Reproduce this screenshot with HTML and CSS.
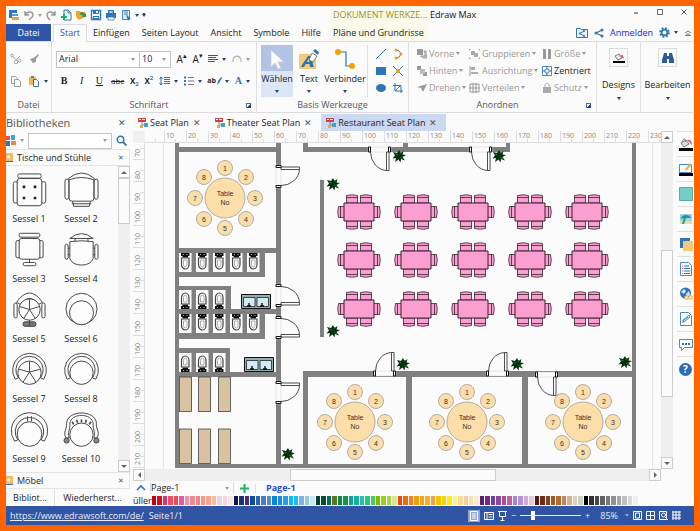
FILE: index.html
```html
<!DOCTYPE html>
<html lang="de">

<head>
    <meta charset="UTF-8">
    <meta name="viewport" content="width=device-width, initial-scale=1.0">
    <title>Edraw Max</title>
    <link rel="stylesheet" href="styles.css">
</head>

<body>
    <div class="app">
        <header class="header">
            <div class="quick">
                <button aria-label="Edraw"><svg width="12" height="12" viewBox="0 0 12 12"><path d="M1 1h8v3H1zM1 4h3v5H1z" fill="#2f74c0"/><path d="M4 5h6v2H4z" fill="#5a9be0"/><path d="M4 8h7v3H4z" fill="#f0a030"/></svg></button>
                <button aria-label="Rückgängig"><svg width="12" height="12" viewBox="0 0 12 12"><path d="M2 2v4h4M2 6c2-4 8-4 8 0 0 2-2 3-4 5" fill="none" stroke="#999" stroke-width="1.4"/></svg></button>
                <i class="caret gray"></i>
                <button aria-label="Wiederholen"><svg width="12" height="12" viewBox="0 0 12 12"><path d="M10 2v4H6M10 6C8 2 2 2 2 6c0 2 1 3 3 5" fill="none" stroke="#999" stroke-width="1.4"/></svg></button>
                <button aria-label="Neu"><svg width="12" height="12" viewBox="0 0 12 12"><path d="M4 1h4l3 3v7H4z" fill="#fff" stroke="#2f74b5"/><path d="M8 1v3h3" fill="none" stroke="#2f74b5"/><path d="M4 5v6M1 8h6" stroke="#19b26b" stroke-width="2"/></svg></button>
                <button aria-label="Öffnen"><svg width="12" height="12" viewBox="0 0 12 12"><path d="M1 2h4l1 1h4v5L4 11 1 8z" fill="#f4a62a"/><path d="M5 4c2-2 4-1 5 1l1-1v4H7l1-1c-1-1-2-2-3-1z" fill="#2c9a55"/></svg></button>
                <button aria-label="Speichern"><svg width="12" height="12" viewBox="0 0 12 12"><path d="M1.500 1.500h9v9h-9z" fill="#fff" stroke="#2f74b5" stroke-width="1.400"/><path d="M3 1h6v4H3zM3 7h6v4H3z" fill="#2f74b5"/><path d="M4 8h4v1H4zM6 2h2v2H6z" fill="#fff"/></svg></button>
                <button aria-label="Drucken"><svg width="12" height="12" viewBox="0 0 12 12"><path d="M3 1h6v3h2v5H1V4h2z" fill="#2f74b5"/><path d="M4 2h4v2H4zM3 8h6v3H3z" fill="#fff" stroke="#2f74b5" stroke-width=".7"/></svg></button>
                <button aria-label="Vorschau"><svg width="12" height="12" viewBox="0 0 12 12"><path d="M2.500 1.500h7v9h-7z" fill="#dce9f7" stroke="#4a88c8"/><path d="M4 3h4M4 5h4" stroke="#4a88c8"/><path d="M6 5l5 5-2 0-1 2z" fill="#2f74b5"/></svg></button>
                <i class="caret"></i>
                <i class="caret barred"></i>
            </div>
            <div class="context-title">DOKUMENT WERKZE...</div>
            <div class="window-bar">
                <h1>Edraw Max</h1>
                <div class="window-buttons">
                    <button aria-label="Minimieren"><svg width="8" height="8" viewBox="0 0 8 8"><path d="M2 5h4" stroke="#555" stroke-width="1.200"/></svg></button>
                    <button aria-label="Maximieren"><svg width="8" height="8" viewBox="0 0 8 8"><path d="M1.500 1.500h5v5h-5z" fill="none" stroke="#666"/></svg></button>
                    <button aria-label="Schließen"><svg width="8" height="8" viewBox="0 0 8 8"><path d="M1.500 1.500l5 5M6.500 1.500l-5 5" stroke="#555"/></svg></button>
                </div>
            </div>
            <nav class="tabs">
                <a href="#datei" class="tab file">Datei</a>
                <a href="#start" class="tab active">Start</a>
                <a href="#einfuegen" class="tab">Einfügen</a>
                <a href="#layout" class="tab">Seiten Layout</a>
                <a href="#ansicht" class="tab">Ansicht</a>
                <a href="#symbole" class="tab">Symbole</a>
                <a href="#hilfe" class="tab">Hilfe</a>
            </nav>
            <a href="#plaene" class="context-tab">Pläne und Grundrisse</a>
            <div class="account">
                <button aria-label="Freigabeordner"><svg width="12" height="12" viewBox="0 0 12 12"><path d="M.5 1.500h4l1 1h6v8H.5z" fill="#eaf3fc" stroke="#2f74b5"/><path d="M8 4L4 6.500 8 9" fill="none" stroke="#2f74b5"/><circle cx="8" cy="4" r="1" fill="#2f74b5"/><circle cx="4" cy="6.500" r="1" fill="#2f74b5"/><circle cx="8" cy="9" r="1" fill="#2f74b5"/></svg></button>
                <button aria-label="Teilen"><svg width="10" height="10" viewBox="0 0 10 10"><path d="M8 2L2 5l6 3" fill="none" stroke="#2f74b5" stroke-width="1.200"/><circle cx="8" cy="2" r="1.500" fill="#2f74b5"/><circle cx="2" cy="5" r="1.500" fill="#2f74b5"/><circle cx="8" cy="8" r="1.500" fill="#2f74b5"/></svg></button>
                <a href="#anmelden" class="login">Anmelden</a>
                <button class="menu" aria-label="Einstellungen"><svg width="11" height="11" viewBox="0 0 12 12"><circle cx="6" cy="6" r="4.800" fill="none" stroke="#2f74b5" stroke-width="2" stroke-dasharray="2 1.770"/><circle cx="6" cy="6" r="3.200" fill="none" stroke="#2f74b5" stroke-width="2"/></svg><i class="caret"></i></button>
                <button aria-label="Menüband einklappen"><svg width="8" height="8" viewBox="0 0 8 8"><path d="M1 4l3-2 3 2M1.500 6.500h5L4 4.500z" fill="none" stroke="#777"/></svg></button>
            </div>
        </header>

        <section class="ribbon">
            <div class="group clipboard">
                <div class="clip-grid">
                    <button aria-label="Ausschneiden"><svg width="12" height="12" viewBox="0 0 12 12"><path d="M2 3l6 5M10 3L6 7" stroke="#aaa"/><circle cx="2" cy="2.500" r="1.300" fill="none" stroke="#aaa"/><circle cx="6" cy="9" r="1.700" fill="none" stroke="#aaa"/><circle cx="9.500" cy="7.500" r="1.500" fill="none" stroke="#aaa"/></svg></button>
                    <button aria-label="Format übertragen"><svg width="12" height="12" viewBox="0 0 12 12"><path d="M10 1l1 1-3 4v3l-3 1-3-4 3-1 2-1z" fill="#999"/></svg></button>
                    <button aria-label="Kopieren"><svg width="12" height="12" viewBox="0 0 12 12"><path d="M1.500 1.500h4l2 2v5h-6z" fill="#fff" stroke="#999"/><path d="M4.500 4.500h4l2 2v5h-6z" fill="#fff" stroke="#999"/></svg></button>
                    <button class="menu" aria-label="Einfügen"><svg width="12" height="12" viewBox="0 0 12 12"><path d="M1 2h7v8H1z" fill="#f0b654"/><path d="M3 1h3v2H3z" fill="#777"/><path d="M5.500 4.500h3l2 2v5h-5z" fill="#fff" stroke="#2f74b5"/></svg><i class="caret"></i></button>
                </div>
                <div class="group-label"><span>Datei</span></div>
            </div>

            <div class="group font-group">
                <div class="font-row first">
                    <div class="combo-pair">
                        <label class="combo family"><select aria-label="Schriftart"><option>Arial</option></select><i class="caret gray"></i></label>
                        <label class="combo size"><select aria-label="Schriftgröße"><option>10</option></select><i class="caret gray"></i></label>
                    </div>
                    <button class="letter" aria-label="Schrift vergrößern">A<sup>▴</sup></button>
                    <button class="letter" aria-label="Schrift verkleinern">A<sup>▾</sup></button>
                    <button class="menu" aria-label="Ausrichten"><svg width="10" height="10" viewBox="0 0 10 10"><path d="M0 1.500h10M0 3.500h8M0 5.500h10M0 7.500h7" stroke="#555"/></svg><i class="caret"></i></button>
                    <button class="menu" aria-label="Bogentext"><svg width="10" height="10" viewBox="0 0 10 10"><path d="M1 8V6c1-5 7-5 8 0v2" fill="none" stroke="#bbb" stroke-width="1.300"/></svg><i class="caret gray"></i></button>
                </div>
                <div class="font-row">
                    <button class="serif" aria-label="Fett"><b>B</b></button>
                    <button class="serif" aria-label="Kursiv"><em>I</em></button>
                    <button class="serif" aria-label="Unterstrichen"><u>U</u></button>
                    <button class="strike" aria-label="Durchgestrichen"><s>abc</s></button>
                    <button class="script" aria-label="Tiefgestellt">X<sub>2</sub></button>
                    <button class="script" aria-label="Hochgestellt">X<sup>2</sup></button>
                    <button class="menu" aria-label="Zeilenabstand"><svg width="11" height="10" viewBox="0 0 11 10"><path d="M2 1v8M.5 3L2 1l1.500 2M.5 7L2 9l1.500-2" fill="none" stroke="#2f74b5"/><path d="M5 1.500h6M5 3.500h6M5 5.500h6M5 7.500h6" stroke="#666"/></svg><i class="caret"></i></button>
                    <button class="menu" aria-label="Liste"><svg width="10" height="10" viewBox="0 0 10 10"><path d="M0 1.500h2M0 5h2M0 8.500h2" stroke="#2f74b5" stroke-width="2"/><path d="M4 1.500h6M4 5h6M4 8.500h6" stroke="#777"/></svg><i class="caret"></i></button>
                    <button class="menu marker" aria-label="Hervorheben">ab<svg width="5" height="8" viewBox="0 0 5 8"><path d="M0 8l1-4 3-4 1 1-3 5z" fill="#2f74b5"/></svg><i class="caret"></i></button>
                    <button class="menu serif blue" aria-label="Schriftfarbe">A<i class="caret"></i></button>
                </div>
                <div class="group-label"><span>Schriftart</span><i class="launcher"></i></div>
            </div>

            <div class="group tools">
                <div class="tools-row">
                    <button class="tool selected"><svg width="18" height="22" viewBox="0 0 18 22"><path d="M3 2v17l4-4 3 6 3-1-3-6h6z" fill="#fafafa" stroke="#c5cbd8" stroke-width=".6"/></svg><span>Wählen</span><i class="caret"></i></button>
                    <button class="tool"><svg width="20" height="22" viewBox="0 0 20 22"><path d="M0 6h17v15H0z" fill="#f7c877"/><path d="M2 19h3l5-9 1 9h4l-1-2-1-9H9L3 17z" fill="#2f74b5"/><path d="M6 14h6v2H5z" fill="#2f74b5"/><path d="M10 12l3-7 5 3-4 6z" fill="#fff" stroke="#555" stroke-width=".7"/><path d="M14 3l2-2 4 3-1 3z" fill="#2f74b5"/></svg><span>Text</span><i class="caret"></i></button>
                    <button class="tool wide"><svg width="22" height="22" viewBox="0 0 22 22"><path d="M3 4h9v14h6" fill="none" stroke="#2f74b5" stroke-width="1.200"/><circle cx="4" cy="4" r="3" fill="#f2a10a"/><circle cx="18" cy="18" r="3" fill="#f2a10a"/></svg><span>Verbinder</span><i class="caret"></i></button>
                    <div class="shape-grid">
                        <button aria-label="Linie"><svg width="12" height="12" viewBox="0 0 12 12"><path d="M1 11L11 1" stroke="#2f74b5"/></svg></button>
                        <button aria-label="Bogen"><svg width="12" height="12" viewBox="0 0 12 12"><path d="M4 2c6 0 6 8 0 8" fill="none" stroke="#2f74b5"/><circle cx="4" cy="2" r="1.500" fill="#f2a10a"/><circle cx="9" cy="6" r="1.500" fill="#f2a10a"/><circle cx="4" cy="10" r="1.500" fill="#f2a10a"/></svg></button>
                        <button aria-label="Rechteck"><svg width="12" height="12" viewBox="0 0 12 12"><path d="M1 2h10v8H1z" fill="#2f74b5"/></svg></button>
                        <button aria-label="Verbindungspunkt"><svg width="12" height="12" viewBox="0 0 12 12"><path d="M1 1l10 10M11 1L1 11" stroke="#2f74b5"/><circle cx="6" cy="6" r="2" fill="#f2a10a"/></svg></button>
                        <button aria-label="Ellipse"><svg width="12" height="12" viewBox="0 0 12 12"><ellipse cx="6" cy="6" rx="5" ry="4" fill="#2f74b5"/></svg></button>
                        <button aria-label="Zuschneiden"><svg width="12" height="12" viewBox="0 0 12 12"><path d="M3 1v8h8M1 3.500h8V11M3 9l6-6" fill="none" stroke="#2f74b5"/></svg></button>
                    </div>
                </div>
                <div class="group-label"><span>Basis Werkzeuge</span></div>
            </div>

            <div class="group arrange">
                <div class="arrange-grid">
                    <button><svg width="10" height="10" viewBox="0 0 10 10"><path d="M0 0h6v6H0z" fill="#999"/><path d="M7 3h1v4H4v1h5V2H7zM6 9h4V5" fill="none" stroke="#999"/></svg>Vorne<i class="caret gray"></i></button>
                    <button><svg width="11" height="10" viewBox="0 0 11 10"><path d="M0 2V0h2M9 0h2v2M11 8v2H9M2 10H0V8" fill="none" stroke="#999"/><path d="M2 2h4v4H2zM5 4h4v4H5z" fill="#aaa"/></svg>Gruppieren<i class="caret gray"></i></button>
                    <button><svg width="10" height="10" viewBox="0 0 10 10"><path d="M1 0h3v10H1zM6 0h3v10H6z" fill="#999"/></svg>Größe<i class="caret gray"></i></button>
                    <button><svg width="10" height="10" viewBox="0 0 10 10"><path d="M0 0h4v4H0zM6 6h4v4H6z" fill="#999"/><path d="M3 3h5v5H3z" fill="#bbb"/></svg>Hinten<i class="caret gray"></i></button>
                    <button><svg width="11" height="10" viewBox="0 0 11 10"><path d="M1 0v10" stroke="#999"/><path d="M2 1h4v3H2zM2 6h7v2H2z" fill="#aaa"/></svg>Ausrichtung<i class="caret gray"></i></button>
                    <button class="enabled"><svg width="10" height="10" viewBox="0 0 10 10"><path d="M.5.5h9v9h-9z" fill="none" stroke="#4a88c8"/><circle cx="5" cy="5" r="2.200" fill="none" stroke="#2f74b5"/><path d="M5 0v3M5 7v3M0 5h3M7 5h3" stroke="#2f74b5"/></svg>Zentriert</button>
                    <button><svg width="10" height="10" viewBox="0 0 10 10"><path d="M0 4l10-3-4 8-2-4z" fill="#999"/></svg>Drehen<i class="caret gray"></i></button>
                    <button><svg width="11" height="10" viewBox="0 0 11 10"><path d="M1 1h9v8H1zM4 0v10M7 0v10M0 5h11" fill="none" stroke="#999"/></svg>Verteilen<i class="caret gray"></i></button>
                    <button><svg width="10" height="10" viewBox="0 0 10 10"><path d="M1 4h8v6H1z" fill="#aaa"/><path d="M3 4V2c0-2 4-2 4 0v2" fill="none" stroke="#aaa"/></svg>Schutz<i class="caret gray"></i></button>
                </div>
                <div class="group-label"><span>Anordnen</span><i class="launcher"></i></div>
            </div>

            <div class="group big">
                <button class="big-button"><span class="box"><svg width="12" height="12" viewBox="0 0 12 12"><path d="M2 4l4-2 3 4-4 2z" fill="#eee" stroke="#777"/><path d="M6 4l4-1 1 4-3-2z" fill="#e05c86"/><path d="M0 9h12v2H0z" fill="#000"/></svg></span><span>Designs</span><i class="caret"></i></button>
            </div>
            <div class="group big last">
                <button class="big-button"><span class="box"><svg width="12" height="12" viewBox="0 0 12 12"><path d="M2 1h3v3h2V1h3l2 7v3H7V7H5v4H0V8z" fill="#2a5d96"/></svg></span><span>Bearbeiten</span><i class="caret"></i></button>
            </div>
        </section>

        <main class="workspace">
            <aside class="library">
                <div class="library-title"><h2>Bibliotheken</h2><button class="close" aria-label="Schließen">✕</button></div>
                <form class="search">
                    <button type="button" class="menu" aria-label="Bibliothek wählen"><svg width="10" height="11" viewBox="0 0 10 11"><path d="M0 1h4v4H0z" fill="#e2574c"/><path d="M5 0h4v5H5z" fill="#3fa3dc"/><path d="M0 6h4v5H0z" fill="#2f74b5"/><path d="M5 6h5v4H5z" fill="#e58a4b"/></svg><i class="caret gray"></i></button>
                    <label class="combo"><input type="text" aria-label="Suche"><i class="caret gray"></i></label>
                    <button type="button" aria-label="Suchen"><svg width="11" height="11" viewBox="0 0 11 11"><circle cx="4.500" cy="4.500" r="3.300" fill="none" stroke="#2f74b5" stroke-width="1.400"/><path d="M7 7l3.500 3.500" stroke="#2f74b5" stroke-width="1.800"/></svg></button>
                </form>
                <div class="section-head"><i class="star">★</i><span>Tische und Stühle</span><button class="close small" aria-label="Schließen">✕</button></div>
                <div class="library-body">
                    <ul class="shapes" id="shapes"></ul>
                    <div class="scroll vertical"><button aria-label="Nach oben"><i class="arrow up"></i></button><div class="thumb"></div><div class="track"></div><button aria-label="Nach unten"><i class="arrow down"></i></button></div>
                </div>
                <div class="section-head"><i class="star">★</i><span>Möbel</span><button class="close small" aria-label="Schließen">✕</button></div>
                <div class="library-tabs"><button class="current">Bibliot...</button><button>Wiederherst...</button></div>
            </aside>

            <section class="editor">
                <div class="doc-tabs" id="doc-tabs"></div>
                <div class="canvas-grid">
                    <div class="corner"></div>
                    <div class="ruler horizontal" id="ruler-x"></div>
                    <div class="scroll vertical page-scroll"><button aria-label="Nach oben"><i class="arrow up"></i></button><div class="track before"></div><div class="thumb"></div><div class="track after"></div><button aria-label="Nach unten"><i class="arrow down"></i></button></div>
                    <div class="ruler upright" id="ruler-y"></div>
                    <div class="canvas">
                        <svg id="plan" class="plan" viewBox="145 142 516 328" preserveAspectRatio="xMinYMin slice" role="img" aria-label="Restaurant Seat Plan">
                            <defs>
                                <g id="door">
                                    <path d="M0 0h23v5H0z" fill="#fbfbfb" stroke="#ccc" stroke-width=".5"/>
                                    <path d="M.5 0h2v5h-2zM20.500 0h2v5h-2z" fill="#fff" stroke="#111"/>
                                    <path d="M18.500 5h2.500v18.500h-2.500z" fill="#fff" stroke="#222" stroke-width=".8"/>
                                    <path d="M2.500 5A17 18.500 0 0 0 18.500 23.500" fill="none" stroke="#222" stroke-width=".8"/>
                                </g>
                                <g id="plant">
                                    <path d="M0-6L1.500-3 4.500-5 3.500-1.500 7-1 3.500 1 6 4.500 2 3 1.500 6.500-.5 3.500-4 6-3 2-6.500 2.500-4-.5-6-4-2-3z" fill="#062d0c"/>
                                    <path d="M1 1l3 2M-1-1l-3-1M1-2l1-2" stroke="#0c7a25"/>
                                </g>
                                <g id="toilet">
                                    <path d="M0 0h12.500v19H0z" fill="#fff"/>
                                    <path d="M2 0h8.500v3H9v1.500H3.500V3H2z" fill="#111"/>
                                    <path d="M4 1.500h1M7.500 1.500h1" stroke="#ddd" stroke-width=".8"/>
                                    <path d="M2.500 5h7.500v6.500a3.750 4.500 0 0 1-7.500 0z" fill="#fff" stroke="#444" stroke-width="1.200"/>
                                    <path d="M4.500 7h3.500v4.500a1.750 2.500 0 0 1-3.500 0z" fill="#fff" stroke="#888" stroke-width=".7"/>
                                </g>
                                <g id="sink">
                                    <path d="M.5.5h29v14H.5z" fill="#8fb0b5" stroke="#111"/>
                                    <path d="M2.500 3.500h11.500v9h-11.500zM16 3.500h11.500v9H16z" fill="#d3eaf0" stroke="#222" stroke-width=".8"/>
                                    <path d="M8 9v4M6 12h4M21 9v4M19 12h4" stroke="#111" stroke-width="1.400"/>
                                </g>
                                <g id="chair-v">
                                    <path d="M.5 9V1.500Q6 0 11.500 1.500V9z" fill="#fb9fd0" stroke="#3a2030" stroke-width=".8"/>
                                    <path d="M.5 3.500h11" stroke="#3a2030" stroke-width=".8"/>
                                </g>
                                <g id="table-six">
                                    <use href="#chair-v" x="-13" y="-18"/><use href="#chair-v" x="1" y="-18"/>
                                    <g transform="scale(1 -1)"><use href="#chair-v" x="-13" y="-18"/><use href="#chair-v" x="1" y="-18"/></g>
                                    <g transform="rotate(-90)"><use href="#chair-v" x="-6" y="-22"/></g>
                                    <g transform="rotate(90)"><use href="#chair-v" x="-6" y="-22"/></g>
                                    <path d="M-15-9h30V9h-30z" fill="#fb9fd0" stroke="#3a2030"/>
                                </g>
                            </defs>
                            <path class="page-edge" d="M163.500 142v328M652.500 142v328"/>
                            <path class="wall" d="M175 142h4v325h-4zM175 146h106v5H175zM276 142h5v321h-5zM175 247h106v5H175zM179 252h86v24h-86zM179 285h52v24h-52zM179 308h102v5H179zM179 313h86v25h-86zM179 347h51v24h-51zM179 371h102v5H179zM175 463h461v4H175zM303 142h5v9h-5zM303 146h207v5H303zM403 142h5v4h-5zM506 142h4v9h-4zM320 179h4v157h-4zM632 142h4v325h-4zM303 370h333v6H303zM303 370h5v93h-5zM406 376h6v87h-6zM522 376h6v87h-6z"/>
                            <g id="furniture"></g>
                        </svg>
                    </div>
                    <div class="scroll sideways"><button aria-label="Nach links"><i class="arrow left"></i></button><div class="track before"></div><div class="thumb"></div><div class="track after"></div><button aria-label="Nach rechts"><i class="arrow right"></i></button></div>
                </div>
                <div class="pages">
                    <svg width="10" height="8" viewBox="0 0 10 8"><path d="M1 6l4-4 4 4" fill="none" stroke="#2f74b5" stroke-width="1.600"/></svg>
                    <label class="combo page-select"><select aria-label="Seite"><option>Page-1</option></select><i class="caret gray"></i></label>
                    <button class="add" aria-label="Seite hinzufügen"><svg width="9" height="9" viewBox="0 0 9 9"><path d="M4.500 0v9M0 4.500h9" stroke="#1fb35c" stroke-width="2"/></svg></button>
                    <a href="#page-1" class="page-link">Page-1</a>
                </div>
                <div class="palette"><span>üller</span><div class="swatches" id="swatches"></div></div>
            </section>

            <nav class="rail" aria-label="Bereiche">
                <button aria-label="Füllung"><svg width="14" height="14" viewBox="0 0 14 14"><path d="M2 6l5-3 3 4-5 3z" fill="#ddd" stroke="#777"/><path d="M4 5c-1-4 3-4 3 0" fill="none" stroke="#777"/><path d="M8 3c4-1 5 2 5 5l-3-3z" fill="#e05c86"/><path d="M0 11h14v3H0z"/></svg></button>
                <button aria-label="Linie"><svg width="14" height="14" viewBox="0 0 14 14"><path d="M.5 2.500h12v8H.5z" fill="#fff" stroke="#4a88c8"/><path d="M6 9l1-3 4-5 2 2-5 5z" fill="#e9ad55"/><path d="M0 11h14v3H0z"/></svg></button>
                <button aria-label="Thema"><svg width="14" height="14" viewBox="0 0 14 14"><path d="M.5.5h13v13H.5z" fill="#74cdc8" stroke="#4fb0aa"/></svg></button>
                <button aria-label="Bild"><svg width="14" height="14" viewBox="0 0 14 14"><path d="M1 2h12v10H1z" fill="#9cd3ee"/><path d="M1 9h12v3H1z" fill="#f0dca0"/><path d="M2 7c0-5 9-5 10-1L7 6 5 12H3l2-6z" fill="#209a80"/></svg></button>
                <button aria-label="Ebenen"><svg width="14" height="14" viewBox="0 0 14 14"><path d="M1 1h10v10H1z" fill="#2f74b5"/><path d="M4 4h10v10H4z" fill="#f3c877"/></svg></button>
                <button aria-label="Eigenschaften"><svg width="14" height="14" viewBox="0 0 14 14"><path d="M1.500.5h8l3 3v10h-11z" fill="#fff" stroke="#4a88c8"/><path d="M5 4h5M5 6.500h6M5 9h6M5 11.500h6" stroke="#2f74b5"/><path d="M3 4h1M3 6.500h1M3 9h1M3 11.500h1" stroke="#e05050"/></svg></button>
                <button aria-label="Hyperlink"><svg width="14" height="14" viewBox="0 0 14 14"><circle cx="6.500" cy="6" r="5.500" fill="#2f74b5"/><path d="M2 5l3-3 2 2-2 3zM7 7l3-3 1 4-3 2z" fill="#d7e8f8"/><path d="M6 9h3v3H6zM10 9h3v3h-3z" fill="#fff" stroke="#f0b040"/></svg></button>
                <button aria-label="Anhang"><svg width="14" height="14" viewBox="0 0 14 14"><path d="M1.500.5h8l3 3v10h-11z" fill="#fff" stroke="#4a88c8"/><path d="M4 11V8l6-5 1 2-6 5-1-1 5-4" fill="none" stroke="#4a88c8"/></svg></button>
                <button aria-label="Kommentar"><svg width="14" height="14" viewBox="0 0 14 14"><path d="M.5 2.500h13v8h-8l-3 3v-3h-2z" fill="#fff" stroke="#4a88c8"/><path d="M3 6h2v2H3zM6 6h2v2H6zM9 6h2v2H9z" fill="#2f74b5"/></svg></button>
                <button aria-label="Hilfe"><span class="help">?</span></button>
            </nav>
        </main>

        <footer class="status">
            <a href="https://www.edrawsoft.com/de/">https://www.edrawsoft.com/de/</a>
            <span>Seite1/1</span>
            <div class="status-tools">
                <button class="pressed" aria-label="Normalansicht"><svg width="10" height="10" viewBox="0 0 10 10"><path d="M1.500.5h7v9h-7zM3 3h4M3 5h4M3 7h4" fill="none" stroke="#fff"/></svg></button>
                <button aria-label="Leseansicht"><svg width="10" height="10" viewBox="0 0 10 10"><path d="M.5 1.500h9v7h-9zM3 1v8M4.500 3.500h4M4.500 6h4" fill="none" stroke="#fff"/></svg></button>
                <button aria-label="Präsentation"><svg width="9" height="10" viewBox="0 0 9 10"><path d="M0 .5h9M1.500 1v4.500h6V1M4.500 6v3M2.500 9.500h4" fill="none" stroke="#fff"/></svg></button>
                <button aria-label="Verkleinern">−</button>
                <input type="range" min="10" max="400" value="85" aria-label="Zoom">
                <button aria-label="Vergrößern">+</button>
                <span class="zoom-value">85%</span>
                <i class="caret light"></i>
                <button aria-label="Ganze Seite"><svg width="9" height="9" viewBox="0 0 9 9"><path d="M.5.5h8v8h-8zM2.500 2h4v5h-4z" fill="none" stroke="#fff"/></svg></button>
                <button aria-label="Seitenbreite"><svg width="9" height="9" viewBox="0 0 9 9"><path d="M.5.5h8v8h-8zM4.500 1v7M1 4.500h7" fill="none" stroke="#fff"/></svg></button>
                <button aria-label="Lupe"><svg width="9" height="9" viewBox="0 0 9 9"><path d="M.5.500h7v8h-7z" fill="none" stroke="#fff"/><circle cx="4.500" cy="4" r="2" fill="#2f55a4" stroke="#fff"/><path d="M6 6l3 3" stroke="#fff"/></svg></button>
                <button aria-label="Raster"><svg width="9" height="9" viewBox="0 0 9 9"><path d="M0 1h9M0 4h9M0 7h9M1 0v9M4 0v9M7 0v9" stroke="#fff"/></svg></button>
            </div>
        </footer>
    </div>

    <script src="script.js"></script>
</body>

</html>
```

FILE: styles.css
```css
* {
    margin: 0;
    padding: 0;
    box-sizing: border-box;
}

body {
    font-family: "Open Sans", "Noto Sans", sans-serif;
    font-size: 9px;
    line-height: 12px;
    color: #222;
    background: #ff6400;
    height: 100vh;
    padding: 6px;
    overflow: hidden;
}

button,
input,
select {
    font: inherit;
    color: inherit;
    background: none;
    border: 0;
    border-radius: 0;
    appearance: none;
    outline: 0;
}

button {
    display: inline-flex;
    align-items: center;
    justify-content: center;
}

a {
    color: inherit;
    text-decoration: none;
}

ul {
    list-style: none;
}

svg {
    display: block;
    flex: none;
}

.app {
    display: flex;
    flex-direction: column;
    height: 100%;
    background: #fbfbfb;
}

.caret {
    border: 2px solid transparent;
    border-top: 3px solid #24427a;
    border-bottom: 0;
    flex: none;
}

.caret.gray {
    border-top-color: #999;
}

.caret.light {
    border-top-color: #8ba3d4;
}

.caret.barred {
    box-shadow: 0 -2px 0 -1px #24427a;
}

.menu {
    gap: 4px;
}

/* header */
.header {
    display: grid;
    grid-template-columns: 324px 98px 1fr;
    grid-template-rows: 18px 17px;
    border-bottom: 1px solid #dcdcdc;
}

.quick {
    display: flex;
    align-items: center;
    gap: 3px;
    padding: 0 2px;
}

.context-title,
.context-tab {
    background: #fafaea;
    padding-left: 3px;
    white-space: nowrap;
}

.context-title {
    color: #9a9132;
    line-height: 18px;
}

.context-tab {
    line-height: 18px;
    color: #222;
}

.window-bar,
.window-buttons,
.account {
    display: flex;
    align-items: center;
}

.window-bar h1 {
    padding-left: 2px;
    font-size: 9px;
    font-weight: 400;
    color: #111;
}

.window-buttons {
    gap: 16px;
    margin-left: auto;
    padding: 0 6px 6px 0;
}

.tabs {
    display: flex;
}

.tab {
    flex: none;
    padding: 0 6px;
    line-height: 17px;
    color: #222;
    white-space: nowrap;
}

.tab.file {
    width: 45px;
    margin-right: 2px;
    padding: 0;
    text-align: center;
    background: #2f55a4;
    color: #fff;
}

.tab.active {
    border: 1px solid #dcdcdc;
    border-bottom: 0;
    margin-bottom: -1px;
    background: #fbfbfb;
    color: #2f55a4;
    line-height: 16px;
}

.account {
    justify-content: flex-end;
    gap: 6px;
    padding-right: 2px;
}

.login {
    color: #2222f0;
}

/* ribbon */
.ribbon {
    display: flex;
    height: 71px;
    border-bottom: 1px solid #dcdcdc;
}

.group {
    display: flex;
    flex-direction: column;
    padding-top: 3px;
    border-right: 1px solid #dedede;
}

.group-label {
    display: flex;
    align-items: center;
    height: 14px;
    margin-top: auto;
    color: #555;
    text-align: center;
}

.group-label span {
    flex: 1;
}

.launcher {
    width: 5px;
    height: 5px;
    margin-right: 5px;
    border: solid #4a6ca8;
    border-width: 1px 0 0 1px;
    background: linear-gradient(135deg, transparent 50%, #24427a 50%);
}

.clipboard {
    flex: 0 0 46px;
}

.clip-grid {
    display: grid;
    grid-template-columns: 12px 18px;
    grid-template-rows: 22px 22px;
    gap: 0 6px;
    padding: 3px 0 0 4px;
    justify-items: start;
}

.font-group {
    flex: 0 0 205px;
}

.font-row {
    display: flex;
    align-items: center;
    justify-content: space-between;
    height: 22px;
    padding: 0 6px;
}

.font-row.first {
    margin-top: 3px;
    padding-left: 4px;
}

.combo-pair {
    display: flex;
}

.combo {
    display: flex;
    align-items: center;
    height: 17px;
    padding: 0 4px 0 2px;
    border: 1px solid #c4c4c4;
    background: #fff;
}

.combo select,
.combo input {
    flex: 1;
    width: 10px;
    min-width: 0;
}

.family {
    width: 84px;
}

.size {
    width: 31px;
    border-left: 0;
}

.letter {
    font-size: 10px;
}

.letter sup {
    font-size: 7px;
    line-height: 6px;
    align-self: flex-start;
}

.serif {
    min-width: 12px;
    font-family: "Liberation Serif", serif;
    font-size: 10px;
}

.blue {
    color: #2f74b5;
    font-weight: 700;
}

.strike {
    font-size: 8px;
}

.script {
    font-size: 8px;
    font-weight: 700;
}

.script sub,
.script sup {
    font-size: 6px;
    line-height: 6px;
    color: #2f74b5;
}

.script sub {
    align-self: flex-end;
}

.script sup {
    align-self: flex-start;
}

.marker {
    gap: 1px;
    font-size: 7px;
    font-weight: 700;
}

.marker svg + .caret {
    margin-left: 2px;
}

.tools {
    flex: 0 0 152px;
}

.tools-row {
    display: flex;
    height: 52px;
    padding-left: 4px;
}

.tool {
    flex-direction: column;
    justify-content: flex-start;
    width: 32px;
    padding-top: 3px;
}

.tool.wide {
    width: 40px;
}

.tool span {
    margin-top: 2px;
    line-height: 14px;
}

.tool .caret {
    margin-top: 4px;
}

.tool.selected {
    background: linear-gradient(#b3c3e6 26px, #dce6f9 26px);
}

.shape-grid {
    display: grid;
    grid-template-columns: 17px 17px;
    margin-left: 2px;
    padding-left: 4px;
    border-left: 1px solid #dedede;
}

.arrange {
    flex: 0 0 187px;
}

.arrange-grid {
    display: grid;
    grid-template-columns: 52px 73px 54px;
    grid-template-rows: repeat(3, 17px);
    padding-left: 8px;
}

.arrange-grid button {
    justify-content: flex-start;
    gap: 2px;
    color: #999;
}

.arrange-grid .enabled {
    color: #222;
}

.big {
    flex: 0 0 44px;
}

.big.last {
    flex: 1;
    border-right: 0;
}

.big-button {
    flex-direction: column;
    padding-top: 3px;
}

.box {
    display: grid;
    place-items: center;
    width: 19px;
    height: 19px;
    margin-bottom: 12px;
    border: 1px solid #dcdcdc;
}

.big-button .caret {
    margin-top: 6px;
}

/* workspace */
.workspace {
    display: flex;
    flex: 1;
    min-height: 0;
}

.library {
    display: flex;
    flex-direction: column;
    flex: 0 0 124px;
    min-width: 0;
}

.library-title {
    display: flex;
    align-items: center;
    height: 19px;
}

.library-title h2 {
    flex: 1;
    font-size: 11px;
    font-weight: 400;
    color: #555;
}

.close {
    width: 12px;
    margin-right: 2px;
    font-size: 9px;
    color: #555;
}

.close.small {
    font-size: 7px;
}

.search {
    display: flex;
    align-items: center;
    gap: 4px;
    height: 17px;
    padding-right: 3px;
}

.search .combo {
    flex: 1;
    height: 16px;
}

.section-head {
    display: flex;
    align-items: center;
    gap: 4px;
    height: 17px;
    border: 1px solid #e4e4e4;
    border-left: 0;
}

.section-head span {
    flex: 1;
}

.star {
    width: 7px;
    height: 9px;
    overflow: hidden;
    background: #f3b95c;
    border-bottom: 1px solid #2f74b5;
    color: #fff;
    font-size: 6px;
    font-style: normal;
    line-height: 8px;
}

.library-body {
    display: flex;
    flex: 1;
    min-height: 0;
}

.shapes {
    display: grid;
    grid-template-columns: 44px 44px;
    grid-auto-rows: 54px;
    gap: 6px 8px;
    flex: 1;
    padding: 6px 0 0 1px;
    overflow: hidden;
}

.shapes li {
    display: flex;
    flex-direction: column;
    align-items: center;
    gap: 6px;
    white-space: nowrap;
}

.shapes svg {
    width: 35px;
    height: 35px;
    overflow: visible;
    fill: #fcfcfc;
    stroke: #444;
    stroke-width: 3;
}

.library-tabs {
    display: flex;
    height: 17px;
}

.library-tabs button {
    flex: 1;
}

.library-tabs .current {
    flex: 0 0 49px;
    border-right: 1px solid #ddd;
}

/* scrollbars */
.scroll {
    display: flex;
    background: #efefef;
}

.scroll.vertical {
    flex-direction: column;
    width: 12px;
}

.scroll button {
    flex: 0 0 12px;
    width: 12px;
    height: 12px;
    background: #fbfbfb;
    border: 1px solid #ccc;
}

.thumb {
    background: #fbfbfb;
    border: 1px solid #ccc;
    flex: 0 0 46px;
}

.track {
    flex: 1;
}

.arrow {
    border: 3px solid transparent;
}

.arrow.up {
    border-top: 0;
    border-bottom-color: #666;
}

.arrow.down {
    border-bottom: 0;
    border-top-color: #666;
}

.arrow.left {
    border-left: 0;
    border-right-color: #666;
}

.arrow.right {
    border-right: 0;
    border-left-color: #666;
}

/* editor */
.editor {
    display: flex;
    flex-direction: column;
    flex: 1;
    min-width: 0;
    margin: 0 4px 0 3px;
}

.doc-tabs {
    display: flex;
    height: 18px;
    padding-top: 1px;
}

.doc-tab {
    display: flex;
    align-items: center;
    gap: 2px;
    padding: 0 5px;
    color: #222;
    white-space: nowrap;
}

.doc-tab.current {
    background: #cbd8f1;
}

.canvas-grid {
    display: grid;
    grid-template-columns: 12px 1fr 12px;
    grid-template-rows: 12px 1fr 12px;
    flex: 1;
    min-height: 0;
}

.corner {
    background: #f0f0f0;
}

.page-scroll {
    grid-column: 3;
    grid-row: 1 / 3;
}

.page-scroll .before {
    flex: 108;
}

.page-scroll .thumb {
    flex: 146;
}

.page-scroll .after {
    flex: 61;
}

.sideways {
    grid-column: 1 / 3;
}

.sideways .before {
    flex: 146;
}

.sideways .thumb {
    flex: 204;
}

.sideways .after {
    flex: 154;
}

.ruler {
    display: flex;
    overflow: hidden;
    font-size: 7px;
    line-height: 10px;
    color: #888;
}

.ruler.horizontal {
    border-bottom: 1px solid #ddd;
}

.ruler span {
    flex: 0 0 22px;
    padding-left: 1px;
    border-left: 1px solid #ddd;
    background: linear-gradient(#ddd, #ddd) 10px 8px / 1px 4px no-repeat;
}

.ruler.horizontal span:first-child {
    flex-basis: 19px;
    color: transparent;
    border-left: 0;
}

.ruler.upright {
    flex-direction: column;
    border-right: 1px solid #ddd;
}

.ruler.upright span {
    writing-mode: vertical-rl;
    transform: rotate(180deg);
    padding: 2px 0 0;
    line-height: 9px;
    border-left: 0;
    border-top: 1px solid #ddd;
    background: linear-gradient(#ddd, #ddd) 0 10px / 4px 1px no-repeat;
}

.ruler.upright span:first-child {
    flex-basis: 17px;
}

.canvas {
    min-width: 0;
    min-height: 0;
    overflow: hidden;
}

.plan {
    width: 100%;
    height: 100%;
    font-family: "Liberation Sans", Arial, sans-serif;
    font-size: 7px;
    text-anchor: middle;
    fill: #333;
}

.wall {
    fill: #808080;
}

.page-edge {
    stroke: #e6e6e6;
}

.seat {
    fill: #fbdeaa;
    stroke: #b5aca0;
}

.bed {
    fill: #d7c2a2;
    stroke: #444;
    stroke-width: 0.8;
}

.pages {
    display: flex;
    align-items: center;
    height: 14px;
    padding-left: 3px;
}

.page-select {
    width: 84px;
    height: 12px;
    margin-left: 4px;
    padding-left: 0;
    border-width: 0 1px;
    border-color: #ddd;
    background: none;
}

.add {
    padding: 0 6px;
    border-right: 1px solid #ddd;
}

.page-link {
    padding-left: 10px;
    color: #2a52d0;
    font-weight: 700;
}

.palette {
    display: flex;
    align-items: center;
    height: 11px;
    padding-right: 35px;
}

.swatches {
    display: flex;
    flex: 1;
    height: 9px;
}

.swatches i {
    flex: 1;
    border-right: 1px solid #fbfbfb;
}

.rail {
    display: flex;
    flex-direction: column;
    flex: 0 0 17px;
    padding-top: 18px;
    overflow: hidden;
}

.rail button {
    height: 25px;
    flex: none;
    border-top: 1px solid #e0e0e0;
}

.help {
    width: 13px;
    height: 13px;
    border-radius: 50%;
    background: #2f6cb3;
    color: #fff;
    font-size: 10px;
    font-weight: 700;
    line-height: 13px;
}

/* status bar */
.status {
    display: flex;
    align-items: center;
    gap: 5px;
    height: 19px;
    padding: 0 13px 0 4px;
    background: #2f55a4;
    color: #e8eefb;
}

.status > a {
    text-decoration: underline;
}

.status-tools {
    display: flex;
    align-items: center;
    gap: 4px;
    margin-left: auto;
}

.status-tools .pressed {
    padding: 1px;
    background: #8ea8db;
}

.status-tools input {
    width: 61px;
    height: 9px;
    background: linear-gradient(#e8eefb, #e8eefb) 0 4px / 100% 1px no-repeat;
}

.status-tools input::-webkit-slider-thumb {
    appearance: none;
    width: 4px;
    height: 9px;
    background: #fff;
}

.zoom-value {
    margin: 0 3px 0 6px;
}
```

FILE: script.js
```js
// library symbols, drawn in a 108 x 108 box
const chairs = [
    '<rect x="18" y="6" width="72" height="13" rx="5"/><rect x="4" y="30" width="14" height="66" rx="6"/><rect x="90" y="30" width="14" height="66" rx="6"/><rect x="16" y="20" width="76" height="84" rx="8"/><path d="M33 42h8v8h-8zM67 42h8v8h-8zM33 76h8v8h-8zM67 76h8v8h-8z" fill="#222" stroke="none"/>',
    '<path d="M14 20Q54-14 94 20L90 34H18z"/><rect x="3" y="22" width="12" height="62" rx="6"/><rect x="93" y="22" width="12" height="62" rx="6"/><path d="M26 88h56l-4 18H30zM24 98h60"/><path d="M16 24q38-14 76 0v58q0 8-8 8H24q-8 0-8-8z"/>',
    '<rect x="22" y="4" width="64" height="12" rx="5"/><rect x="12" y="26" width="12" height="54" rx="6"/><rect x="84" y="26" width="12" height="54" rx="6"/><rect x="22" y="20" width="64" height="64" rx="8"/><path d="M54 84v12"/><rect x="34" y="94" width="40" height="10" rx="5"/>',
    '<path d="M18 20Q54-10 90 20z"/><path d="M34 20v8M74 20v8"/><rect x="3" y="38" width="10" height="46" rx="5"/><rect x="95" y="38" width="10" height="46" rx="5"/><path d="M12 50h8M12 70h8M88 50h8M88 70h8"/><path d="M18 30q36-6 72 0v52q-8 20-36 20t-36-20z"/>',
    '<path d="M14 32Q54-26 94 32L82 38Q54 0 26 38z"/><rect x="6" y="34" width="10" height="46" rx="5"/><rect x="92" y="34" width="10" height="46" rx="5"/><circle cx="54" cy="54" r="33"/><path d="M54 22v32l-30-9M54 54l30-9M54 54L36 82M54 54l18 28"/><rect x="34" y="92" width="40" height="14" rx="6" fill="#777"/><path d="M54 87v18"/>',
    '<circle cx="54" cy="52" r="48"/><circle cx="54" cy="64" r="37"/>',
    '<path d="M10 84A52 52 0 1 1 98 84L88 80A42 42 0 1 0 20 80z"/><circle cx="54" cy="64" r="36"/><path d="M54 28v34l-33-9M54 62l33-9M54 62L34 93M54 62l20 31"/>',
    '<path d="M10 84A52 52 0 1 1 98 84L88 80A42 42 0 1 0 20 80z"/><circle cx="54" cy="64" r="36"/>',
    '<path d="M8 90A56 56 0 1 1 100 90L90 86A44 44 0 1 0 18 86z"/><path d="M48 13v16M60 13v16"/><circle cx="54" cy="68" r="38"/>',
    '<path d="M6 80C-4 62 10 52 8 36 8-8 100-8 100 36 98 52 112 62 102 80L92 80C98 62 88 52 90 36 88 2 20 2 18 36 20 52 10 62 16 80z"/><circle cx="8" cy="88" r="8" fill="#888"/><circle cx="100" cy="88" r="8" fill="#888"/><circle cx="54" cy="70" r="36"/><path d="M30 38l-5-8M42 33l-3-9M54 32v-9M66 33l3-9M78 38l5-8" stroke-width="5"/>'
];

document.getElementById("shapes").innerHTML = chairs.map((shape, i) =>
    `<li><svg viewBox="0 0 108 108" aria-hidden="true">${shape}</svg>Sessel ${i + 1}</li>`
).join("");

// document tabs
const docIcon = '<svg width="10" height="11" viewBox="0 0 10 11"><path d="M0 1h8v4H0z" fill="#cf3f4c"/><path d="M1 2h2v1H1zM4 2h3v1H4z" fill="#fff"/><path d="M4 5v3h2" fill="none" stroke="#888"/><path d="M2 8h3v3H2z" fill="#f4a62a"/><path d="M6 6h4v4H6z" fill="#3d9be0"/></svg>';
document.getElementById("doc-tabs").innerHTML = ["Seat Plan", "Theater Seat Plan", "Restaurant Seat Plan"].map((name, i) =>
    `<div class="doc-tab${i === 2 ? " current" : ""}">${docIcon}<span>${name}</span><button class="close" aria-label="Schließen">✕</button></div>`
).join("");

// rulers
function fillRuler(id, from, to) {
    let html = "";
    for (let n = from; n <= to; n += 10) {
        html += `<span>${n}</span>`;
    }
    document.getElementById(id).innerHTML = html;
}
fillRuler("ruler-x", 0, 230);
fillRuler("ruler-y", 70, 210);

// floor plan
let plan = "";

function use(id, transform) {
    plan += `<use href="#${id}" transform="${transform}"/>`;
}

function roundTable(cx, cy) {
    plan += `<circle class="seat" cx="${cx}" cy="${cy}" r="20"/><text x="${cx}" y="${cy - 2}">Table</text><text x="${cx}" y="${cy + 7}">No</text>`;
    const spots = [[0, -30], [21, -21], [30, 0], [21, 21], [0, 30], [-21, 21], [-30, 0], [-21, -21]];
    spots.forEach(([dx, dy], i) => {
        plan += `<circle class="seat" cx="${cx + dx}" cy="${cy + dy}" r="7.500"/><text x="${cx + dx}" y="${cy + dy + 3}">${i + 1}</text>`;
    });
}

[[225, 197], [355, 421], [467, 421], [583, 421]].forEach(([x, y]) => roundTable(x, y));

[211, 259, 308].forEach(y => {
    [359, 416, 473, 530, 587].forEach(x => use("table-six", `translate(${x} ${y})`));
});

// toilets: count, top edge, tank at the bottom
[[5, 252, false], [3, 289, true], [5, 313, false], [3, 352, true]].forEach(([count, y, flip]) => {
    for (let i = 0; i < count; i++) {
        const x = 179 + i * 17;
        use("toilet", flip ? `matrix(1 0 0 -1 ${x} ${y + 19})` : `translate(${x} ${y})`);
    }
});

use("sink", "translate(241 293)");
use("sink", "translate(244 356)");

[376, 428].forEach(y => {
    [179.5, 198.5, 218.5].forEach(x => {
        plan += `<rect class="bed" x="${x}" y="${y}" width="12" height="34.500"/>`;
    });
});

use("door", "matrix(0 -1 1 0 276 187)");
use("door", "matrix(0 1 1 0 276 283)");
use("door", "matrix(0 1 1 0 276 315)");
use("door", "matrix(0 -1 1 0 276 403)");
use("door", "translate(368 146)");
use("door", "translate(469 146)");
use("door", "matrix(1 0 0 -1 373 375)");
use("door", "matrix(1 0 0 -1 486 375)");
use("door", "translate(535 371)");

[[333, 183], [399, 155], [499, 155], [333, 330], [403, 363], [517, 363], [625, 361], [288, 453]].forEach(([x, y]) => {
    use("plant", `translate(${x} ${y})`);
});

document.getElementById("furniture").innerHTML = plan;

// fill colours
const colours = [
    "c00010", "d40f1c", "c83c6e", "ef5060", "f04a55", "e75aa0", "ee8fb4", "f08a90", "f47f86", "f4988c", "f6a78c", "f9bba6", "ead6ea", "f6d5e4", "fbe3ea",
    "0a1a50", "1f2f7a", "4a2a80", "0f4aa0", "2a62b0", "4a7ac8", "5a8ad0", "0a84d8", "1a8ae0", "2a9aea", "10b4f8", "18bcf8", "7ab4e0", "92c8ee", "c8e8f8",
    "063c2c", "08502c", "0a6a60", "5a7a20", "0a8a3a", "0a9a4a", "10a098", "1ab0a0", "2abcb0", "20c880", "50c860", "80b800", "9ccc20", "a8d060", "d8e890",
    "e84a10", "f06a10", "f08030", "f49a10", "f4a410", "f8b020", "f0a050", "f8c400", "fad000", "fcec10", "fbf090", "f4dc98", "f0d0a0", "fae0b0", "fbead0",
    "5c2068", "742a80", "6a40a0", "8a4aa0", "a84a98", "c060a0", "a088d0", "b890d8", "d4a8d8", "ecc4e0",
    "4a1c10", "6a2c14", "84401c", "a05a28", "b06a34", "b88860", "dcb088", "dcd0c0", "c8d4c8",
    "000000", "303030", "484848", "606060", "787878", "909090", "a8a8a8", "c0c0c0", "d8d8d8", "f0f0f0"
];
document.getElementById("swatches").innerHTML = colours.map(c => `<i style="background:#${c}"></i>`).join("");
```
